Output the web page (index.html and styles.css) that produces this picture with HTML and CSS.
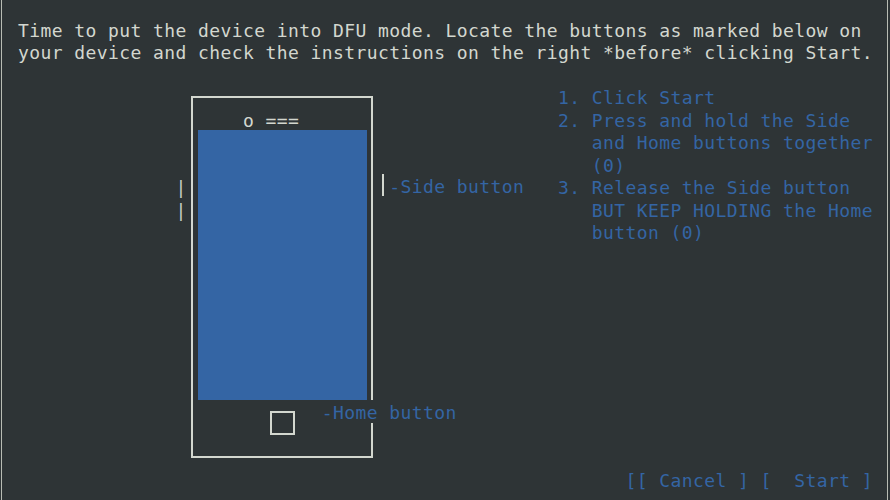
FILE: index.html
```html
<!DOCTYPE html>
<html lang="en">
<head>
<meta charset="utf-8">
<title>DFU mode</title>
<link rel="stylesheet" href="styles.css">
</head>
<body>
<div class="screen">
  <div class="grid">
    <div class="txt head1">Time to put the device into DFU mode. Locate the buttons as marked below on</div>
    <div class="txt head2">your device and check the instructions on the right *before* clicking Start.</div>

    <div class="frame"></div>
    <div class="txt camera">o ===</div>
    <div class="display"></div>
    <div class="txt lpipe r8">|</div>
    <div class="txt lpipe r9">|</div>
    <div class="txt side"><span class="side-bar"></span><span class="blue">-Side button</span></div>
    <div class="homekey"></div>
    <div class="txt blue homelabel">-Home button</div>

    <div class="txt blue steps">1. Click Start
2. Press and hold the Side
   and Home buttons together
   (0)
3. Release the Side button
   BUT KEEP HOLDING the Home
   button (0)</div>

    <div class="txt blue actions">[[ Cancel ] [  Start ]</div>
  </div>
</div>
</body>
</html>
```

FILE: styles.css
```css
html, body {
  margin: 0;
  padding: 0;
  background: #2e3436;
}

.screen {
  box-sizing: border-box;
  margin-left: 1px;
  width: 887px;
  height: 500px;
  border-left: 1px solid #b8bcb4;
  border-right: 1px solid #b8bcb4;
  padding: 17.75px 0 0 16px;
  overflow: hidden;
  background: #2e3436;
}

.grid {
  display: grid;
  grid-template-columns: repeat(77, 11.25px);
  grid-template-rows: repeat(21, 22.5px);
}

.txt {
  font-family: "DejaVu Sans Mono", monospace;
  font-size: 18px;
  letter-spacing: 0.413px;
  line-height: 22.5px;
  padding-top: 1.75px;
  white-space: pre;
  color: #d3d7cf;
}

.blue { color: #3465a4; }

.head1 { grid-row: 1; grid-column: 1 / span 77; }
.head2 { grid-row: 2; grid-column: 1 / span 77; }

.frame {
  grid-row: 4 / 21;
  grid-column: 16 / 33;
  margin: 10.25px 4.625px;
  border: 2px solid #d3d7cf;
}

.camera { grid-row: 5; grid-column: 21 / span 5; }

.display {
  grid-row: 6 / 18;
  grid-column: 17 / 32;
  background: #3465a4;
}

.lpipe { grid-column: 15; color: #c6cac2; }
.r8 { grid-row: 8; }
.r9 { grid-row: 9; }

.side {
  grid-row: 8;
  grid-column: 33 / span 13;
  display: flex;
  align-items: center;
  padding-top: 0;
}

.side-bar {
  width: 11.25px;
  height: 22px;
  display: flex;
  justify-content: center;
}

.side-bar::before {
  content: "";
  width: 2px;
  height: 22px;
  margin-left: -1px;
  margin-top: -2px;
  background: #d3d7cf;
}

.side .blue { padding-top: 1.75px; }

.homekey {
  grid-row: 18 / 20;
  grid-column: 23 / 26;
  margin: 10.25px 4.625px;
  border: 2px solid #d3d7cf;
}

.homelabel {
  grid-row: 18;
  grid-column: 28 / span 12;
  height: 20.75px;
  background: #2e3436;
}

.steps {
  grid-row: 4 / 11;
  grid-column: 49 / span 29;
}

.actions {
  grid-row: 21;
  grid-column: 55 / span 22;
}
```
